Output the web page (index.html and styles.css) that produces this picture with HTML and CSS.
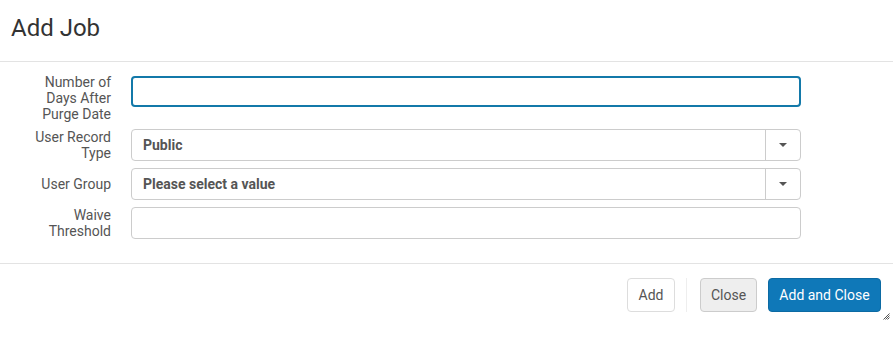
FILE: index.html
```html
<!DOCTYPE html>
<html lang="en">
<head>
<meta charset="utf-8">
<title>Add Job</title>
<link rel="stylesheet" href="styles.css">
</head>
<body>
<div class="dialog">
  <div class="dialog-header">
    <h1 class="dialog-title">Add Job</h1>
  </div>
  <div class="dialog-body">
    <div class="form-grid">
      <label class="field-label">Number of Days After Purge Date</label>
      <div class="field-input focused"></div>

      <label class="field-label">User Record Type</label>
      <div class="field-select">
        <span class="select-value">Public</span>
        <span class="select-caret"><span class="caret"></span></span>
      </div>

      <label class="field-label">User Group</label>
      <div class="field-select">
        <span class="select-value">Please select a value</span>
        <span class="select-caret"><span class="caret"></span></span>
      </div>

      <label class="field-label">Waive Threshold</label>
      <div class="field-input"></div>
    </div>
  </div>
  <div class="dialog-footer">
    <button class="btn btn-default">Add</button>
    <span class="btn-sep"></span>
    <button class="btn btn-secondary">Close</button>
    <button class="btn btn-primary">Add and Close</button>
  </div>
  <svg class="resize-handle" width="7" height="7" viewBox="0 0 7 7">
    <path d="M6.5 0.5 L0.5 6.5 M6.5 2.5 L2.5 6.5 M6.5 4.5 L4.5 6.5" stroke="#555" stroke-width="1" fill="none"/>
  </svg>
</div>
</body>
</html>
```

FILE: styles.css
```css
html, body {
  margin: 0;
  padding: 0;
  background: #fff;
}

body {
  font-family: Roboto, "Liberation Sans", Arial, sans-serif;
  color: #333;
  font-size: 14px;
}

.dialog {
  position: relative;
  width: 893px;
  height: 339px;
}

.dialog-header {
  padding: 14px 11px 19px;
  border-bottom: 1px solid #e3e3e3;
}

.dialog-title {
  margin: 0;
  font-size: 24px;
  font-weight: 400;
  line-height: 28px;
  color: #333;
}

.dialog-body {
  padding: 12px 0 24px;
}

.form-grid {
  display: grid;
  grid-template-columns: 80px 670px;
  column-gap: 20px;
  row-gap: 7px;
  align-items: start;
  padding-left: 31px;
}

.field-label {
  display: flex;
  align-items: center;
  justify-content: flex-end;
  text-align: right;
  min-height: 32px;
  font-size: 14px;
  line-height: 16px;
  color: #555;
}

.field-input {
  box-sizing: border-box;
  height: 32px;
  border: 1px solid #ccc;
  border-radius: 4px;
  background: #fff;
}

.field-input.focused {
  margin-top: 2px;
  height: 31px;
  border: 2px solid #1379a9;
}

.field-select {
  box-sizing: border-box;
  display: flex;
  align-items: stretch;
  height: 32px;
  border: 1px solid #ccc;
  border-radius: 4px;
  background: #fff;
}

.select-value {
  flex: 1;
  display: flex;
  align-items: center;
  padding-left: 11px;
  font-weight: 700;
  color: #555;
  font-size: 14px;
}

.select-caret {
  width: 34px;
  border-left: 1px solid #ccc;
  display: flex;
  align-items: center;
  justify-content: center;
}

.caret {
  width: 0;
  height: 0;
  border-left: 4px solid transparent;
  border-right: 4px solid transparent;
  border-top: 4px solid #555;
}

.dialog-footer {
  border-top: 1px solid #e3e3e3;
  padding: 14px 12px 0 0;
  display: flex;
  justify-content: flex-end;
  align-items: center;
}

.btn {
  box-sizing: border-box;
  height: 34px;
  padding: 0 11px;
  border-radius: 4px;
  font-family: Roboto, "Liberation Sans", Arial, sans-serif;
  font-size: 14px;
  cursor: pointer;
}

.btn-default {
  background: #fff;
  border: 1px solid #ddd;
  color: #555;
  width: 48px;
  padding: 0;
}

.btn-sep {
  width: 1px;
  height: 34px;
  background: #eee;
  margin: 0 13px 0 11px;
}

.btn-secondary {
  background: #eee;
  border: 1px solid #ccc;
  color: #555;
  width: 57px;
  padding: 0;
}

.btn-primary {
  margin-left: 11px;
  background: #0f78b8;
  border: 1px solid #0c6aa3;
  color: #fff;
  width: 113px;
  padding: 0;
}

.resize-handle {
  position: absolute;
  left: 883px;
  top: 313px;
}
```
